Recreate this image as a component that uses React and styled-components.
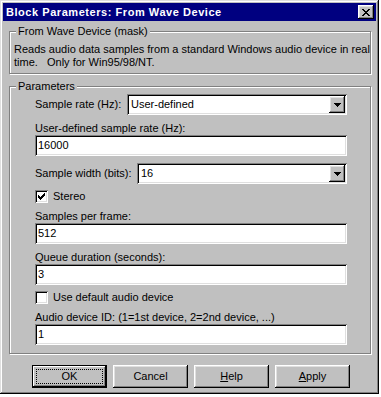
import React from 'react'
import styled, { createGlobalStyle } from 'styled-components'

const GlobalStyle = createGlobalStyle`
  html, body { margin: 0; padding: 0; background: #fff; }
  body {
    font-family: "Liberation Sans", Arial, sans-serif;
    font-size: 11px;
    line-height: 13px;
    color: #000;
  }
`

const raised = `
  box-shadow: inset -1px -1px #000, inset 1px 1px #fff,
    inset -2px -2px #808080, inset 2px 2px #dfdfdf;
`
const sunken = `
  box-shadow: inset 1px 1px #808080, inset -1px -1px #fff,
    inset 2px 2px #000, inset -2px -2px #dfdfdf;
`

const Window = styled.div`
  width: 379px;
  height: 394px;
  box-sizing: border-box;
  padding: 3px;
  background: #c0c0c0;
  box-shadow: inset -1px -1px #000, inset 1px 1px #dfdfdf,
    inset -2px -2px #808080, inset 2px 2px #fff;
  display: flex;
  flex-direction: column;
`

const TitleBar = styled.div`
  height: 18px;
  background: #000080;
  color: #fff;
  display: flex;
  align-items: center;
  justify-content: space-between;
  padding: 0 2px 0 3px;
`

const Title = styled.span`
  font-weight: bold;
  font-size: 11px;
  letter-spacing: 0.55px;
  padding-top: 1px;
`

const CloseBtn = styled.div`
  width: 16px;
  height: 14px;
  background: #c0c0c0;
  ${raised}
  display: flex;
  align-items: center;
  justify-content: center;
  svg { display: block; margin-left: -1px; }
`

const Body = styled.div`
  display: flex;
  flex-direction: column;
  padding: 4px 5px 0 6px;
`

const Group = styled.fieldset`
  margin: ${p => (p.$gap ? '6px 0 0' : '0')};
  padding: 0;
  min-width: 0;
  border: 1px solid #808080;
  box-shadow: 1px 1px #fff, inset 1px 1px #fff;
`

const Legend = styled.legend`
  margin-left: 6px;
  padding: 0 2px;
  background: #c0c0c0;
  line-height: 13px;
`

const Description = styled.div`
  padding: 5px 4px 4px 4px;
  white-space: pre;
`

const Params = styled.div`
  display: flex;
  flex-direction: column;
  gap: 6px;
  padding: 0 23px 8px 25px;
`

const Row = styled.div`
  display: flex;
  align-items: center;
  padding-top: 1px;
`

const RowLabel = styled.span`
  width: ${p => p.$w}px;
  flex: none;
  white-space: nowrap;
`

const Field = styled.div`
  display: flex;
  flex-direction: column;
  padding-top: 1px;
`

const Combo = styled.div`
  flex: 1;
  height: 21px;
  box-sizing: border-box;
  background: #fff;
  ${sunken}
  padding: 2px;
  display: flex;
  align-items: center;
`

const ComboText = styled.span`
  flex: 1;
  padding-left: 2px;
`

const ComboButton = styled.div`
  width: 16px;
  height: 17px;
  background: #c0c0c0;
  ${raised}
  display: flex;
  align-items: center;
  justify-content: center;
`

const Edit = styled.div`
  height: 21px;
  box-sizing: border-box;
  background: #fff;
  ${sunken}
  padding: 0 3px;
  display: flex;
  align-items: center;
`

const CheckRow = styled.label`
  display: flex;
  align-items: center;
  gap: 5px;
  height: 13px;
`

const CheckBox = styled.span`
  width: 13px;
  height: 13px;
  box-sizing: border-box;
  background: #fff;
  ${sunken}
  display: flex;
  align-items: center;
  justify-content: center;
`

const Buttons = styled.div`
  display: flex;
  gap: 6px;
  margin-top: 11px;
  padding-left: 23px;
`

const Button = styled.div`
  width: 75px;
  height: 23px;
  box-sizing: border-box;
  background: #c0c0c0;
  ${raised}
  ${p => p.$default && 'box-shadow: inset -2px -2px #000, inset 1px 1px #000, inset 2px 2px #fff, inset -3px -3px #808080;'}
  padding: 4px;
  display: flex;
`

const Focus = styled.span`
  flex: 1;
  display: flex;
  align-items: center;
  justify-content: center;
  border: 1px dotted ${p => (p.$on ? '#000' : 'transparent')};
  u { text-decoration: underline; text-underline-offset: 1px; }
`

const CloseGlyph = () => (
  <svg width="8" height="7" viewBox="0 0 8 7" shapeRendering="crispEdges">
    <path
      d="M0 0h2v1h-2zM6 0h2v1h-2zM1 1h2v1h-2zM5 1h2v1h-2zM2 2h4v1h-4zM3 3h2v1h-2zM2 4h4v1h-4zM1 5h2v1h-2zM5 5h2v1h-2zM0 6h2v1h-2zM6 6h2v1h-2z"
      fill="#000"
    />
  </svg>
)

const Arrow = () => (
  <svg width="7" height="4" viewBox="0 0 7 4" shapeRendering="crispEdges">
    <path d="M0 0h7v1h-7zM1 1h5v1h-5zM2 2h3v1h-3zM3 3h1v1h-1z" fill="#000" />
  </svg>
)

const Check = () => (
  <svg width="7" height="7" viewBox="0 0 7 7" shapeRendering="crispEdges">
    <path
      d="M6 0h1v1h-1zM5 1h2v1h-2zM0 2h1v1h-1zM4 2h3v1h-3zM0 3h2v1h-2zM3 3h3v1h-3zM0 4h5v1h-5zM1 5h3v1h-3zM2 6h1v1h-1z"
      fill="#000"
    />
  </svg>
)

const Select = ({ label, width, value }) => (
  <Row>
    <RowLabel $w={width}>{label}</RowLabel>
    <Combo>
      <ComboText>{value}</ComboText>
      <ComboButton><Arrow /></ComboButton>
    </Combo>
  </Row>
)

const TextField = ({ label, value }) => (
  <Field>
    <span>{label}</span>
    <Edit>{value}</Edit>
  </Field>
)

const Option = ({ label, checked }) => (
  <CheckRow>
    <CheckBox>{checked && <Check />}</CheckBox>
    <span>{label}</span>
  </CheckRow>
)

export default function App() {
  return (
    <>
      <GlobalStyle />
      <Window>
        <TitleBar>
          <Title>Block Parameters: From Wave Device</Title>
          <CloseBtn><CloseGlyph /></CloseBtn>
        </TitleBar>
        <Body>
          <Group>
            <Legend>From Wave Device (mask)</Legend>
            <Description>
              {'Reads audio data samples from a standard Windows audio device in real\ntime.   Only for Win95/98/NT.'}
            </Description>
          </Group>
          <Group $gap>
            <Legend>Parameters</Legend>
            <Params>
              <Select label="Sample rate (Hz):" width={92} value="User-defined" />
              <TextField label="User-defined sample rate (Hz):" value="16000" />
              <Select label="Sample width (bits):" width={102} value="16" />
              <Option label="Stereo" checked />
              <TextField label="Samples per frame:" value="512" />
              <TextField label="Queue duration (seconds):" value="3" />
              <Option label="Use default audio device" />
              <TextField label="Audio device ID: (1=1st device, 2=2nd device, ...)" value="1" />
            </Params>
          </Group>
          <Buttons>
            <Button $default><Focus $on>OK</Focus></Button>
            <Button><Focus>Cancel</Focus></Button>
            <Button><Focus><span><u>H</u>elp</span></Focus></Button>
            <Button><Focus><span><u>A</u>pply</span></Focus></Button>
          </Buttons>
        </Body>
      </Window>
    </>
  )
}
